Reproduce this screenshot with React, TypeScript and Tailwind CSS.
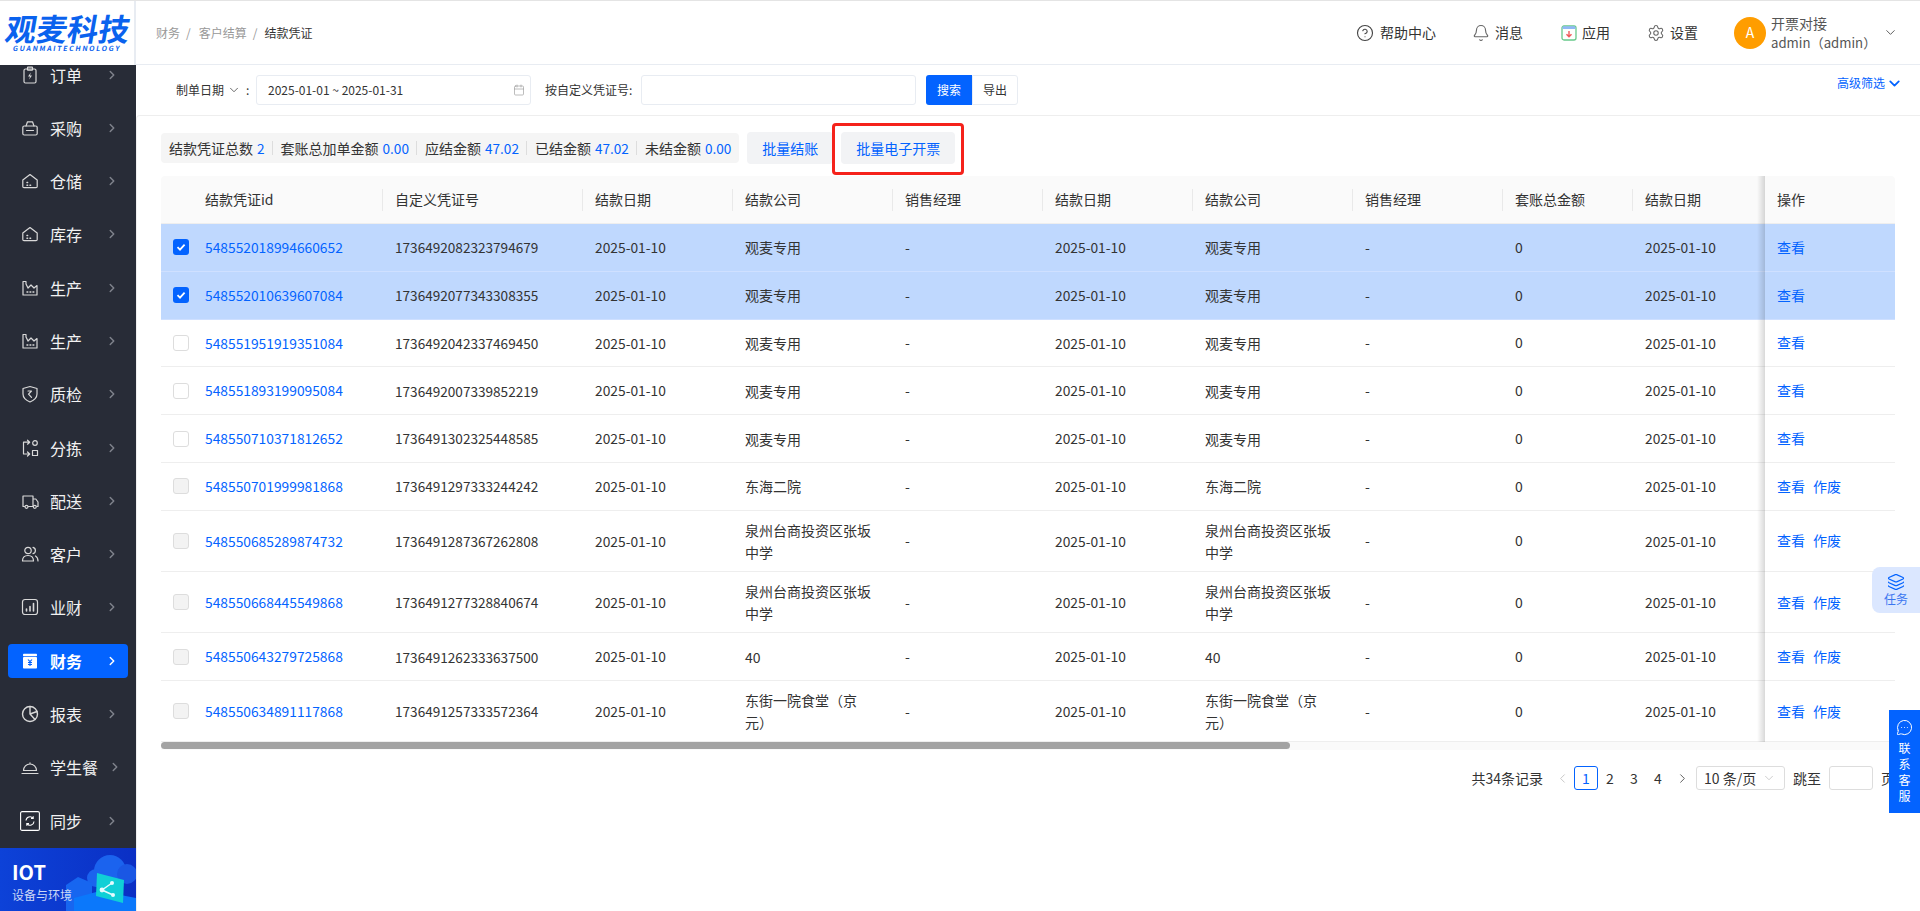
import React from 'react';
import { Bell, Calendar, ChevronDown, ChevronLeft, ChevronRight, CircleHelp, Layers, MessageCircleMore, Settings } from 'lucide-react';

const stroke = { fill: 'none', stroke: 'currentColor', strokeWidth: 1.2, strokeLinecap: 'round', strokeLinejoin: 'round' } as const;

const navIcons: Record<string, React.ReactNode> = {
  order: (
    <>
      <rect x="3" y="3" width="12" height="14" rx="1.5" {...stroke} />
      <rect x="6.5" y="1.2" width="5" height="3" rx="0.5" {...stroke} />
      <path d="M9.8 6.5 7 10.5h2L8.2 13.5 11 9.5H9z" fill="currentColor" />
    </>
  ),
  bag: (
    <>
      <rect x="1.8" y="7" width="14.4" height="9" rx="1.5" {...stroke} />
      <path d="M5 7 6.5 2.8h5L13 7M5.5 11.5h7" {...stroke} />
    </>
  ),
  house: (
    <>
      <path d="M1.8 14.5V8L9 2.5 16.2 8v6.5a1.2 1.2 0 0 1-1.2 1.2H3a1.2 1.2 0 0 1-1.2-1.2z" {...stroke} />
      <path d="M6 10.5h.6M6 13.2h.6M9 13.2h.6" {...stroke} strokeWidth={1.5} />
    </>
  ),
  factory: (
    <>
      <path d="M2 2.5V16h14V6.5L13 9l-3-3-3 3-2-4V2.5z" {...stroke} />
      <path d="M6 13h.8M9 13h.8M12 13h.8" {...stroke} strokeWidth={1.5} />
    </>
  ),
  shield: (
    <>
      <path d="M9 1.5 16 3.5V9c0 4-3.500 6.500-7 8-3.500-1.500-7-4-7-8V3.500z" {...stroke} />
      <path d="M7 6h3.500L7.500 9.200l3 3.200" {...stroke} />
    </>
  ),
  sort: (
    <>
      <path d="M8.500 3.200H2.500V15h6M6.500 1.200l2.200 2-2.200 2M6.500 13l2.200 2-2.200 2" {...stroke} />
      <circle cx="14" cy="4" r="2.300" {...stroke} />
      <rect x="11.500" y="11.500" width="5" height="5" {...stroke} />
    </>
  ),
  truck: (
    <>
      <path d="M3.500 14.500H2V4h10v10.500H7.500M12 7h2.800L17 10v4.500h-1" {...stroke} />
      <circle cx="5.500" cy="14.800" r="1.500" {...stroke} />
      <circle cx="13.800" cy="14.800" r="1.500" {...stroke} />
    </>
  ),
  users: (
    <>
      <circle cx="7" cy="5.500" r="3.200" {...stroke} />
      <path d="M1.500 16c0-3.800 2.500-5.500 5.500-5.500s5.500 1.700 5.500 5.500zM12 2.400a3.200 3.200 0 0 1 0 6.200M14.500 11c1.500.8 2.500 2.500 2.500 5" {...stroke} />
    </>
  ),
  chart: (
    <>
      <rect x="1.500" y="1.500" width="15" height="15" rx="2.500" {...stroke} />
      <path d="M5.500 11v2M9 8.500V13M12.500 5.500V13" {...stroke} strokeWidth={1.6} />
    </>
  ),
  finance: (
    <>
      <rect x="2" y="1.800" width="14" height="2.400" rx="0.8" fill="currentColor" />
      <rect x="2" y="5" width="14" height="11.500" rx="0.8" fill="currentColor" />
      <path d="M7 7.500l2 2.200 2-2.200M9 9.700V14M7 10.500h4M7 12.500h4" fill="none" stroke="#0363ff" strokeWidth="1.100" />
    </>
  ),
  pie: (
    <>
      <circle cx="9" cy="9" r="7.500" {...stroke} strokeWidth={1.4} />
      <path d="M9 1.500V9l5 5.500M9 9l7-2.500" {...stroke} strokeWidth={1.4} />
    </>
  ),
  dish: (
    <>
      <path d="M2.500 12.500a6.500 6.500 0 0 1 13 0zM9 6V4.800M1 15.500h16" {...stroke} />
    </>
  ),
};

const navItems = [
  { label: '订单', icon: 'order' },
  { label: '采购', icon: 'bag' },
  { label: '仓储', icon: 'house' },
  { label: '库存', icon: 'house' },
  { label: '生产', icon: 'factory' },
  { label: '生产', icon: 'factory' },
  { label: '质检', icon: 'shield' },
  { label: '分拣', icon: 'sort' },
  { label: '配送', icon: 'truck' },
  { label: '客户', icon: 'users' },
  { label: '业财', icon: 'chart' },
  { label: '财务', icon: 'finance', active: true },
  { label: '报表', icon: 'pie' },
  { label: '学生餐', icon: 'dish' },
];

const gridCols = 'grid grid-cols-[32px_190px_200px_150px_160px_150px_150px_160px_150px_130px_132px_130px]';

const headers = ['结款凭证id', '自定义凭证号', '结款日期', '结款公司', '销售经理', '结款日期', '结款公司', '销售经理', '套账总金额', '结款日期'];

const rows = [
  { id: '548552018994660652', no: '1736492082323794679', company: '观麦专用', state: 'checked' },
  { id: '548552010639607084', no: '1736492077343308355', company: '观麦专用', state: 'checked' },
  { id: '548551951919351084', no: '1736492042337469450', company: '观麦专用', state: 'open' },
  { id: '548551893199095084', no: '1736492007339852219', company: '观麦专用', state: 'open' },
  { id: '548550710371812652', no: '1736491302325448585', company: '观麦专用', state: 'open' },
  { id: '548550701999981868', no: '1736491297333244242', company: '东海二院', state: 'off' },
  { id: '548550685289874732', no: '1736491287367262808', company: '泉州台商投资区张坂中学', state: 'off', tall: true },
  { id: '548550668445549868', no: '1736491277328840674', company: '泉州台商投资区张坂中学', state: 'off', tall: true },
  { id: '548550643279725868', no: '1736491262333637500', company: '40', state: 'off' },
  { id: '548550634891117868', no: '1736491257333572364', company: '东街一院食堂（京元）', state: 'off', tall: true },
];

function Sidebar() {
  return (
    <aside className="flex w-[136px] shrink-0 flex-col bg-[#282c37]">
      <div className="relative z-10 flex h-[64px] shrink-0 flex-col items-center border-r-2 border-[#e8ecf2] bg-white pt-[10px] text-[#0a62ee]">
        <div className="-skew-x-[10deg] pl-[2px] text-[31px] leading-[34px] font-bold">观麦科技</div>
        <div className="-skew-x-[10deg] text-[7px] leading-[7px] font-bold tracking-[1.65px] whitespace-nowrap">GUANMAITECHNOLOGY</div>
      </div>
      <nav className="flex flex-1 flex-col gap-[19.3px] overflow-hidden px-[8px]">
        <div className="-mt-[26.800px]" />
        {navItems.map((item, i) => (
          <div
            key={i}
            className={`flex h-[34px] shrink-0 items-center gap-[10px] rounded-[4px] pr-[9px] pl-[12px] ${item.active ? 'bg-[#0363ff] font-bold text-white' : 'text-[#f2f2f2]'}`}
          >
            <svg viewBox="0 0 18 18" className={`h-[18px] w-[20px] shrink-0 ${item.active ? 'text-white' : 'text-[#d9d9d9]'}`}>
              {navIcons[item.icon]}
            </svg>
            <span className="text-[16px] leading-[24px] whitespace-nowrap">{item.label}</span>
            <ChevronRight size={14} strokeWidth={2.5} className={`ml-auto shrink-0 ${item.active ? 'text-white' : 'text-[#7f828b]'}`} />
          </div>
        ))}
        <div className="flex h-[34px] shrink-0 items-center gap-[10px] pr-[9px] pl-[12px] text-[#f2f2f2]">
          <svg viewBox="0 0 20 20" className="h-[20px] w-[20px] shrink-0 text-white">
            <rect x="0.600" y="0.600" width="18.800" height="18.800" rx="1.500" fill="none" stroke="currentColor" strokeWidth="1.100" />
            <path d="M6 9.500a4 4 0 0 1 7-2.400M14 10.500a4 4 0 0 1-7 2.400M13.200 5.200v2.200H11M6.800 14.800v-2.200H9" fill="none" stroke="currentColor" strokeWidth="1.100" />
          </svg>
          <span className="text-[16px] leading-[24px]">同步</span>
          <ChevronRight size={14} strokeWidth={2.5} className="ml-auto shrink-0 text-[#7f828b]" />
        </div>
      </nav>
      <div className="relative h-[63px] shrink-0 overflow-hidden bg-gradient-to-r from-[#0d42d8] to-[#0b2fc4] pt-[12px] pl-[12px] text-white">
        <svg viewBox="0 0 136 63" className="absolute inset-0 h-[63px] w-[136px]">
          <circle cx="110" cy="23" r="16" fill="#1b63ee" />
          <circle cx="127" cy="26" r="10" fill="#1a57e4" />
          <circle cx="96" cy="30" r="9" fill="#1b63ee" />
          <polygon points="66,37 78,29 92,35 92,63 66,63" fill="#1766f0" />
          <polygon points="74,63 74,50 100,43 136,50 136,63" fill="#0b78fb" />
          <polygon points="97,25 124,32 123,55 96,48" fill="#10cfd6" />
          <path d="M112 35 102 42 113 47" fill="none" stroke="#e6fbff" strokeWidth="1.500" />
          <circle cx="112" cy="35" r="2" fill="#e6fbff" />
          <circle cx="102" cy="42" r="2.400" fill="#e6fbff" />
          <circle cx="113" cy="47" r="2" fill="#e6fbff" />
        </svg>
        <div className="relative text-[20px] leading-[24px] font-bold">IOT</div>
        <div className="relative mt-[3px] text-[12px] leading-[16px] text-[#ccd8f5]">设备与环境</div>
      </div>
    </aside>
  );
}

function TopBar() {
  return (
    <header className="flex h-[64px] shrink-0 items-center border-b border-[#e8ecf2] bg-white text-[14px] text-[#333]">
      <div className="flex items-center gap-[6px] pl-[20px] text-[12px] text-[#999]">
        <span>财务</span>
        <span>/</span>
        <span className="ml-[2px]">客户结算</span>
        <span>/</span>
        <span className="ml-[1px] text-[#333]">结款凭证</span>
      </div>
      <div className="ml-auto flex items-center">
        <CircleHelp size={18} strokeWidth={1.5} className="text-[#444]" />
        <span className="ml-[6px]">帮助中心</span>
        <Bell size={18} strokeWidth={1.5} className="ml-[36px] text-[#666]" />
        <span className="ml-[5px]">消息</span>
        <svg viewBox="0 0 16 16" className="ml-[38px] h-[16px] w-[16px]">
          <rect x="1" y="1" width="14" height="14" rx="2" fill="#fdfffd" stroke="#67c98a" strokeWidth="1.300" />
          <path d="M1.500 4V2.500a1.200 1.200 0 0 1 1.200-1.200h10.600a1.200 1.200 0 0 1 1.200 1.200V4z" fill="#8fb8f6" />
          <path d="M8 6v5.500M5.500 9.200 8 11.800l2.500-2.600" fill="none" stroke="#ef5b5b" strokeWidth="1.400" />
        </svg>
        <span className="ml-[5px]">应用</span>
        <Settings size={18} strokeWidth={1.4} className="ml-[37px] text-[#666]" />
        <span className="ml-[5px]">设置</span>
        <div className="ml-[36px] flex h-[32px] w-[32px] items-center justify-center rounded-full bg-[#ff9d00] text-[14px] text-white">A</div>
        <div className="ml-[5px] w-[99px] text-[14px] leading-[19px] text-[#555]">
          <div>开票对接</div>
          <div className="text-[13.200px] whitespace-nowrap">admin（admin）</div>
        </div>
        <ChevronDown size={15} strokeWidth={1.5} className="mr-[22px] ml-[13px] text-[#555]" />
      </div>
    </header>
  );
}

function FilterBar() {
  return (
    <div className="flex h-[50px] shrink-0 pt-[10px] pl-[40px] text-[12px] text-[#333]">
      <div className="flex h-[30px] w-[80px] items-center whitespace-nowrap">
        制单日期
        <ChevronDown size={14} strokeWidth={1.5} className="ml-[3px] text-[#555]" />
        <span className="ml-[5px]">:</span>
      </div>
      <div className="flex h-[30px] w-[275px] items-center rounded-[3px] border border-[#e8ecf2] pr-[5px] pl-[11px]">
        2025-01-01 ~ 2025-01-31
        <Calendar size={12} strokeWidth={1.3} className="ml-auto text-[#999]" />
      </div>
      <div className="ml-[14px] flex h-[30px] w-[96px] items-center whitespace-nowrap">按自定义凭证号:</div>
      <div className="h-[30px] w-[275px] rounded-[3px] border border-[#e8ecf2]" />
      <div className="ml-[10px] flex h-[30px] w-[46px] items-center justify-center rounded-l-[3px] bg-[#0363ff] text-white">搜索</div>
      <div className="flex h-[30px] w-[46px] items-center justify-center rounded-r-[3px] border border-[#e8ecf2]">导出</div>
      <div className="ml-auto flex h-[16px] items-center pr-[17px] text-[#0363ff]">
        高级筛选
        <ChevronDown size={17} strokeWidth={2.5} className="ml-[1px]" />
      </div>
    </div>
  );
}

function Stat({ label, value, first }: { label: string; value: string; first?: boolean }) {
  return (
    <>
      {!first && <span className="mx-[7.500px] h-[14px] w-px bg-[#dddddd]" />}
      <span>{label}</span>
      <span className="ml-[4px] text-[13.600px] text-[#0363ff]">{value}</span>
    </>
  );
}

function Check({ state }: { state: string }) {
  if (state === 'checked') {
    return (
      <span className="flex h-[16px] w-[16px] items-center justify-center rounded-[3px] bg-[#0363ff]">
        <svg viewBox="0 0 12 12" className="h-[12px] w-[12px]">
          <path d="M2.500 6.200 5 8.600 9.600 3.600" fill="none" stroke="#fff" strokeWidth="1.800" />
        </svg>
      </span>
    );
  }
  return <span className={`h-[16px] w-[16px] rounded-[3px] border border-[#dddddd] ${state === 'off' ? 'bg-[#f3f3f3]' : 'bg-white'}`} />;
}

function Table() {
  return (
    <div className="relative mt-[12px] w-[1734px] text-[14px] text-[#333]">
      <div className={`${gridCols} h-[48px] items-center rounded-t-[4px] border-b border-[#eeeeee] bg-[#fafafa]`}>
        <span />
        {headers.map((h, i) => (
          <span
            key={i}
            className={`relative flex h-full items-center pl-[12px] ${i < 9 ? "after:absolute after:right-0 after:h-[22px] after:w-px after:bg-[#e9e9e9] after:content-['']" : ''}`}
          >
            {h}
          </span>
        ))}
        <span className="flex h-full items-center pl-[12px]">操作</span>
      </div>
      {rows.map((r) => {
        const selected = r.state === 'checked';
        return (
          <div
            key={r.id}
            className={`${gridCols} ${r.tall ? 'h-[61.300px]' : 'h-[47.800px]'} items-center border-b ${selected ? 'border-[#cfe0ff] bg-[#bfd8fe]' : 'border-[#eeeeee] bg-white'}`}
          >
            <span className="flex pl-[12px]">
              <Check state={r.state} />
            </span>
            <span className="pl-[12px] text-[13.800px] text-[#0363ff]">{r.id}</span>
            <span className="pl-[12px] text-[13.600px]">{r.no}</span>
            <span className="pl-[12px] text-[13.800px]">2025-01-10</span>
            <span className="pr-[20px] pl-[12px] leading-[22px]">{r.company}</span>
            <span className="pl-[12px]">-</span>
            <span className="pl-[12px] text-[13.800px]">2025-01-10</span>
            <span className="pr-[20px] pl-[12px] leading-[22px]">{r.company}</span>
            <span className="pl-[12px]">-</span>
            <span className="pl-[12px]">0</span>
            <span className="pl-[12px] text-[13.800px]">2025-01-10</span>
            <span className="flex h-full items-center gap-[8px] pl-[12px] text-[#0363ff]">
              <span>查看</span>
              {r.state === 'off' && <span>作废</span>}
            </span>
          </div>
        );
      })}
      <div className="h-[8px] bg-[#fafafa]">
        <div className="h-[7px] w-[1129px] rounded-full bg-[#a3a3a3]" />
      </div>
      {/* shadow of the fixed action column */}
      <div className="absolute top-0 bottom-[8px] left-[1596px] w-[8px] bg-gradient-to-l from-black/15 to-transparent" />
    </div>
  );
}

function Pagination() {
  return (
    <div className="mt-[16px] flex h-[24px] items-center justify-end pr-[25px] text-[14px] text-[#333]">
      <span className="mr-[7px]">共34条记录</span>
      <span className="flex h-[24px] w-[24px] items-center justify-center text-[#c4c4c4]">
        <ChevronLeft size={15} strokeWidth={1.5} />
      </span>
      <span className="flex h-[24px] w-[24px] items-center justify-center rounded-[3px] border border-[#0363ff] text-[#0363ff]">1</span>
      {['2', '3', '4'].map((p) => (
        <span key={p} className="flex h-[24px] w-[24px] items-center justify-center">
          {p}
        </span>
      ))}
      <span className="flex h-[24px] w-[24px] items-center justify-center text-[#555]">
        <ChevronRight size={15} strokeWidth={1.5} />
      </span>
      <span className="ml-[2px] flex h-[24px] w-[89px] items-center rounded-[3px] border border-[#dddddd] pl-[7px]">
        10 条/页
        <ChevronDown size={14} strokeWidth={1} className="ml-[6px] text-[#aaa]" />
      </span>
      <span className="ml-[8px]">跳至</span>
      <span className="ml-[8px] h-[24px] w-[44px] rounded-[3px] border border-[#dddddd]" />
      <span className="ml-[8px]">页</span>
    </div>
  );
}

export default function App() {
  return (
    <div className="relative flex h-[911px] w-[1920px] overflow-hidden border-t border-[#e4e4e4] bg-white [font-family:'Noto_Sans_CJK_SC','Noto_Sans',sans-serif]">
      <Sidebar />
      <main className="flex min-w-0 flex-1 flex-col">
        <TopBar />
        <FilterBar />
        <section className="flex-1 rounded-tl-[4px] border-t border-l border-[#eeeeee] pt-[16px] pl-[24px]">
          <div className="flex h-[32px] items-center">
            <div className="flex h-[30px] items-center rounded-[4px] bg-[#f5f5f5] px-[8px] text-[14px] text-[#333]">
              <Stat first label="结款凭证总数" value="2" />
              <Stat label="套账总加单金额" value="0.00" />
              <Stat label="应结金额" value="47.02" />
              <Stat label="已结金额" value="47.02" />
              <Stat label="未结金额" value="0.00" />
            </div>
            <div className="ml-[8px] flex h-[32px] w-[86px] items-center justify-center rounded-[4px] bg-[#f2f3f5] text-[14px] text-[#0363ff]">批量结账</div>
            <div className="relative ml-[8px] flex h-[32px] w-[114px] items-center justify-center rounded-[4px] bg-[#f2f3f5] text-[14px] text-[#0363ff]">
              批量电子开票
              <span className="absolute -top-[9px] -right-[9px] -bottom-[11px] -left-[9px] rounded-[4px] border-[3px] border-[#f5221b]" />
            </div>
          </div>
          <Table />
          <Pagination />
        </section>
      </main>

      <div className="absolute top-[566px] right-0 flex h-[46px] w-[48px] flex-col items-center justify-center rounded-l-[8px] bg-[#dbe7ff] text-[12px] leading-[16px] text-[#3a76f0]">
        <Layers size={18} strokeWidth={1.5} className="text-[#0363ff]" />
        任务
      </div>
      <div className="absolute top-[709px] right-0 flex h-[103px] w-[31px] flex-col items-center bg-[#0363ff] pt-[9px] text-[12px] leading-[16px] text-white">
        <MessageCircleMore size={17} strokeWidth={1.4} className="mb-[4px]" />
        <span>联</span>
        <span>系</span>
        <span>客</span>
        <span>服</span>
      </div>
    </div>
  );
}
